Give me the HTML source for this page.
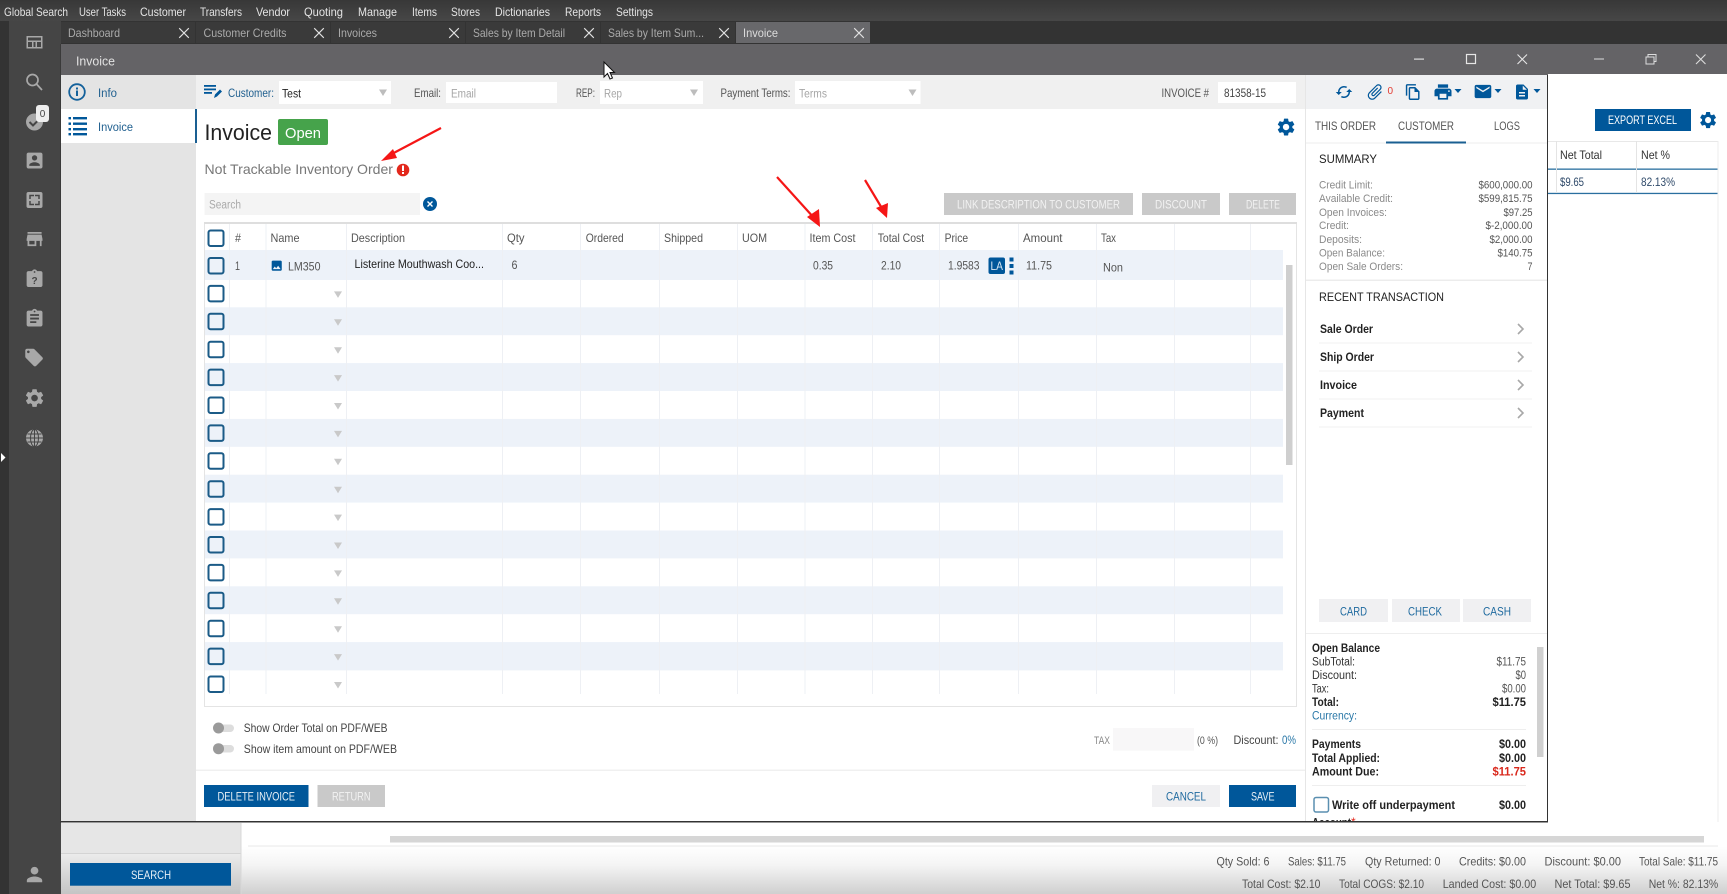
<!DOCTYPE html>
<html><head><meta charset="utf-8"><title>Invoice</title>
<style>
html,body{margin:0;padding:0;background:#fff;width:1727px;height:894px;overflow:hidden}
svg{display:block;font-family:"Liberation Sans",sans-serif;font-size:12px;filter:blur(.3px)}
.m{fill:#e4e4e4;font-size:12px}
.t{fill:#ababab;font-size:12px}
.d{fill:#444;font-size:11.5px}
.g{fill:#8a8a8a;font-size:11px}
.l{fill:#a6a6a6;font-size:11.5px}
.b{fill:#1f5f8f;font-size:11.5px}
.w{fill:#fff;font-size:12px}
.k{fill:#222;font-size:12px}
.bb{fill:#222;font-size:12px;font-weight:700}
.s{fill:#555;font-size:12px}
.i{fill:#a8a8a8}
.u{fill:#00579a}
</style></head><body>
<svg width="1727" height="894" viewBox="0 0 1727 894" xmlns="http://www.w3.org/2000/svg">
<defs>
<linearGradient id="gm" x1="0" y1="0" x2="0" y2="1"><stop offset="0" stop-color="#383838"/><stop offset="1" stop-color="#474747"/></linearGradient>
<linearGradient id="gb" x1="0" y1="0" x2="0" y2="1"><stop offset="0" stop-color="#fff"/><stop offset=".4" stop-color="#f4f4f4"/><stop offset="1" stop-color="#cfcfcf"/></linearGradient>
<linearGradient id="gs" x1="0" y1="0" x2="0" y2="1"><stop offset="0" stop-color="#ececec"/><stop offset="1" stop-color="#c4c4c4"/></linearGradient>
<path id="gear" d="M19.14 12.94c.04-.3.06-.61.06-.94 0-.32-.02-.64-.07-.94l2.03-1.58c.18-.14.23-.41.12-.61l-1.92-3.32c-.12-.22-.37-.29-.59-.22l-2.39.96c-.5-.38-1.03-.7-1.62-.94l-.36-2.54c-.04-.24-.24-.41-.48-.41h-3.84c-.24 0-.43.17-.47.41l-.36 2.54c-.59.24-1.13.57-1.62.94l-2.39-.96c-.22-.08-.47 0-.59.22L2.74 8.87c-.12.21-.08.47.12.61l2.03 1.58c-.05.3-.09.63-.09.94s.02.64.07.94l-2.03 1.58c-.18.14-.23.41-.12.61l1.92 3.32c.12.22.37.29.59.22l2.39-.96c.5.38 1.03.7 1.62.94l.36 2.54c.05.24.24.41.48.41h3.84c.24 0 .44-.17.47-.41l.36-2.54c.59-.24 1.13-.56 1.62-.94l2.39.96c.22.08.47 0 .59-.22l1.92-3.32c.12-.22.07-.47-.12-.61l-2.01-1.58zM12 15.6c-1.98 0-3.6-1.62-3.6-3.6s1.62-3.6 3.6-3.6 3.6 1.62 3.6 3.6-1.62 3.6-3.6 3.6z"/>
<rect id="cb" x="208.5" y="-7.5" width="15" height="15.5" rx="2" fill="none" stroke="#1b5b87" stroke-width="2"/>
<path id="dd" d="M334 -2h8l-4 6.5z" fill="#c9c9c9"/>
<path id="tx" d="M-4.800 -4.800L4.800 4.800M4.800 -4.800L-4.800 4.800" stroke="#e2e2e2" stroke-width="1.100" fill="none"/>
<path id="car" d="M-3.5 -2h7l-3.5 4z" fill="#00579a"/>
<path id="chev" d="M-2.5 -5L2.5 0L-2.5 5" stroke="#a8a8a8" stroke-width="1.6" fill="none"/>
</defs>

<!-- base -->
<rect width="1727" height="894" fill="#fff"/>
<rect width="1727" height="21" fill="url(#gm)"/>
<rect y="21" width="1727" height="23" fill="#333"/>
<rect y="21" width="9" height="873" fill="#333"/>
<rect x="9" y="21" width="52" height="873" fill="#454545"/>

<!-- menu -->
<text class="m" x="4" y="16" textLength="64" lengthAdjust="spacingAndGlyphs">Global Search</text>
<text class="m" x="79" y="16" textLength="47" lengthAdjust="spacingAndGlyphs">User Tasks</text>
<text class="m" x="140" y="16" textLength="46" lengthAdjust="spacingAndGlyphs">Customer</text>
<text class="m" x="200" y="16" textLength="42" lengthAdjust="spacingAndGlyphs">Transfers</text>
<text class="m" x="256" y="16" textLength="34" lengthAdjust="spacingAndGlyphs">Vendor</text>
<text class="m" x="304" y="16" textLength="39" lengthAdjust="spacingAndGlyphs">Quoting</text>
<text class="m" x="358" y="16" textLength="39" lengthAdjust="spacingAndGlyphs">Manage</text>
<text class="m" x="412" y="16" textLength="25" lengthAdjust="spacingAndGlyphs">Items</text>
<text class="m" x="451" y="16" textLength="29" lengthAdjust="spacingAndGlyphs">Stores</text>
<text class="m" x="495" y="16" textLength="55" lengthAdjust="spacingAndGlyphs">Dictionaries</text>
<text class="m" x="565" y="16" textLength="36" lengthAdjust="spacingAndGlyphs">Reports</text>
<text class="m" x="616" y="16" textLength="37" lengthAdjust="spacingAndGlyphs">Settings</text>

<!-- tabs -->
<rect x="61" y="22" width="134" height="21" fill="#3a3a3a"/>
<rect x="196" y="22" width="134" height="21" fill="#3a3a3a"/>
<rect x="331" y="22" width="134" height="21" fill="#3a3a3a"/>
<rect x="466" y="22" width="134" height="21" fill="#3a3a3a"/>
<rect x="601" y="22" width="134" height="21" fill="#3a3a3a"/>
<rect x="736" y="22" width="134" height="21" fill="#68686b"/>
<text class="t" x="68" y="37" textLength="52" lengthAdjust="spacingAndGlyphs">Dashboard</text>
<text class="t" x="203.500" y="37" textLength="83" lengthAdjust="spacingAndGlyphs">Customer Credits</text>
<text class="t" x="338" y="37" textLength="39" lengthAdjust="spacingAndGlyphs">Invoices</text>
<text class="t" x="473" y="37" textLength="92" lengthAdjust="spacingAndGlyphs">Sales by Item Detail</text>
<text class="t" x="608" y="37" textLength="96" lengthAdjust="spacingAndGlyphs">Sales by Item Sum...</text>
<text x="743" y="37" fill="#ddd" textLength="35" lengthAdjust="spacingAndGlyphs">Invoice</text>
<use href="#tx" x="184" y="33"/><use href="#tx" x="319" y="33"/><use href="#tx" x="454" y="33"/><use href="#tx" x="589" y="33"/><use href="#tx" x="724" y="33"/><use href="#tx" x="859" y="33"/>

<!-- sidebar icons -->
<g class="i">
<path fill-rule="evenodd" d="M26.500 36h16v12.500h-16zM28 37.500v3h13v-3zM28 42v5h4v-5zM33.500 42v5h2v-5zM37 42v5h4v-5z"/>
<g fill="none" stroke="#a8a8a8" stroke-width="1.700"><circle cx="32.500" cy="80" r="5.500"/><path d="M36.500 84L42 90"/></g>
<circle cx="34.500" cy="122" r="8.500"/>
<path d="M29.500 122l3.500 3.500 6-6" fill="none" stroke="#454545" stroke-width="2"/>
<path transform="translate(24,150) scale(.88)" d="M3 5v14c0 1.100.89 2 2 2h14c1.100 0 2-.9 2-2V5c0-1.100-.9-2-2-2H5c-1.110 0-2 .9-2 2zm12 4c0 1.660-1.340 3-3 3s-3-1.340-3-3 1.340-3 3-3 3 1.340 3 3zm-9 8c0-2 4-3.100 6-3.100s6 1.100 6 3.100v1H6v-1z"/>
<rect x="26.500" y="192" width="16" height="16" rx="2"/>
<path d="M30 199v-3.500h4M35 195.500h4V199M39 201v3.500h-4M34 204.500h-4V201" fill="none" stroke="#454545" stroke-width="1.500"/>
<path transform="translate(24,228.500) scale(.88)" d="M20 4H4v2h16V4zm1 10v-2l-1-5H4l-1 5v2h1v6h10v-6h4v6h2v-6h1zm-9 4H6v-4h6v4z"/>
<path transform="translate(24,268.500) scale(.88)" d="M19 3h-4.180C14.400 1.840 13.300 1 12 1c-1.300 0-2.400.84-2.820 2H5c-1.100 0-2 .9-2 2v14c0 1.100.9 2 2 2h14c1.100 0 2-.9 2-2V5c0-1.100-.9-2-2-2zm-7 0c.55 0 1 .45 1 1s-.45 1-1 1-1-.45-1-1 .45-1 1-1z"/>
<text x="34.500" y="284" text-anchor="middle" fill="#454545" font-size="10" font-weight="700">?</text>
<path transform="translate(24,308) scale(.88)" d="M19 3h-4.180C14.400 1.840 13.300 1 12 1c-1.300 0-2.400.84-2.820 2H5c-1.100 0-2 .9-2 2v14c0 1.100.9 2 2 2h14c1.100 0 2-.9 2-2V5c0-1.100-.9-2-2-2zm-7 0c.55 0 1 .45 1 1s-.45 1-1 1-1-.45-1-1 .45-1 1-1zm2 14H7v-2h7v2zm3-4H7v-2h10v2zm0-4H7V7h10v2z"/>
<path transform="translate(23.500,347) scale(.88)" d="M21.410 11.580l-9-9C12.050 2.220 11.550 2 11 2H4c-1.100 0-2 .9-2 2v7c0 .55.22 1.050.59 1.420l9 9c.36.36.86.58 1.410.58.55 0 1.050-.22 1.410-.59l7-7c.37-.36.59-.86.59-1.410 0-.55-.23-1.060-.59-1.420zM5.500 7C4.670 7 4 6.330 4 5.500S4.670 4 5.500 4 7 4.670 7 5.500 6.330 7 5.500 7z"/>
<use href="#gear" transform="translate(23.500,387) scale(.92)"/>
<circle cx="34.500" cy="438" r="8.500"/>
<g fill="none" stroke="#454545" stroke-width="1"><ellipse cx="34.500" cy="438" rx="4" ry="8.500"/><path d="M26 438h17M27.500 434h14M27.500 442h14M34.500 429.500v17"/></g>
<path transform="translate(23,863) scale(.96)" d="M12 12c2.210 0 4-1.790 4-4s-1.790-4-4-4-4 1.790-4 4 1.790 4 4 4zm0 2c-2.670 0-8 1.340-8 4v2h16v-2c0-2.660-5.330-4-8-4z"/>
</g>
<path d="M1 453l4.500 4.500L1 462z" fill="#fff"/>
<rect x="36" y="105" width="13" height="17" rx="3" fill="#eee"/>
<text x="42.500" y="117" text-anchor="middle" font-size="10" fill="#444">0</text>

<!-- back window -->
<rect x="1548" y="44" width="179" height="30" fill="#646366"/>
<rect x="1594" y="58.500" width="10" height="1" fill="#ddd"/>
<path d="M1646 57h8v7h-8zM1648 57v-2.500h8v7h-2" fill="none" stroke="#ddd" stroke-width="1"/>
<path d="M1696 54.500l9.500 9.500M1705.500 54.500l-9.500 9.500" stroke="#ddd" stroke-width="1.100"/>
<rect x="1595" y="109" width="96" height="22" class="u"/>
<text class="w" x="1608" y="124" textLength="69" lengthAdjust="spacingAndGlyphs">EXPORT EXCEL</text>
<use href="#gear" class="u" transform="translate(1698,110) scale(.84)"/>
<rect x="1548" y="141" width="170" height="1" fill="#e8e8e8"/>
<rect x="1548" y="168.500" width="170" height="1.300" fill="#2a6f9f"/>
<rect x="1548" y="192.800" width="170" height="1.300" fill="#2a6f9f"/>
<rect x="1556" y="141" width="1" height="52" fill="#e4e4e4"/>
<rect x="1636" y="141" width="1" height="52" fill="#e4e4e4"/>
<rect x="1717.500" y="141" width="1" height="705" fill="#ececec"/>
<text x="1560" y="159" fill="#333" textLength="42" lengthAdjust="spacingAndGlyphs">Net Total</text>
<text x="1641" y="159" fill="#333" textLength="29" lengthAdjust="spacingAndGlyphs">Net %</text>
<text x="1560" y="186" fill="#2f4a6a" textLength="24" lengthAdjust="spacingAndGlyphs">$9.65</text>
<text x="1641" y="186" fill="#2f4a6a" textLength="34" lengthAdjust="spacingAndGlyphs">82.13%</text>

<!-- main window -->
<rect x="61" y="44" width="1487" height="31" fill="#646366"/>
<rect x="61" y="75" width="1487" height="747" fill="#fff"/>
<text x="76" y="65.500" fill="#e2e2e2" font-size="13" textLength="39" lengthAdjust="spacingAndGlyphs">Invoice</text>
<rect x="1414" y="58.500" width="10" height="1.200" fill="#ddd"/>
<rect x="1466.500" y="54.500" width="9" height="9" fill="none" stroke="#e6e6e6" stroke-width="1.200"/>
<path d="M1517.500 54.500l9.500 9.500M1527 54.500l-9.500 9.500" stroke="#e6e6e6" stroke-width="1.100"/>

<!-- left nav -->
<rect x="61" y="75" width="135" height="747" fill="#e4e4e4"/>
<rect x="61" y="109" width="135" height="34" fill="#fff"/>
<rect x="195" y="109" width="2" height="34" fill="#1a5f92"/>
<circle cx="77" cy="92" r="7.800" fill="none" stroke="#14619b" stroke-width="1.800"/>
<rect x="76" y="90.500" width="2" height="5.500" fill="#14619b"/><rect x="76" y="87.500" width="2" height="2" fill="#14619b"/>
<text class="b" x="98" y="97" font-weight="400" textLength="19" lengthAdjust="spacingAndGlyphs">Info</text>
<text class="b" x="98" y="131" textLength="35" lengthAdjust="spacingAndGlyphs">Invoice</text>
<g class="u"><rect x="68.500" y="117" width="2.500" height="2.400"/><rect x="73" y="117" width="14" height="2.400"/><rect x="68.500" y="122.500" width="2.500" height="2.400"/><rect x="73" y="122.500" width="14" height="2.400"/><rect x="68.500" y="128" width="2.500" height="2.400"/><rect x="73" y="128" width="14" height="2.400"/><rect x="68.500" y="133" width="2.500" height="2.400"/><rect x="73" y="133" width="14" height="2.400"/></g>

<!-- toolbar -->
<rect x="196" y="75" width="1109" height="34" fill="#f0f0f0"/>
<rect x="1305" y="75" width="242" height="34" fill="#f0f1f3"/>
<g class="u"><rect x="204" y="85" width="12" height="1.800"/><rect x="204" y="88.500" width="12" height="1.800"/><rect x="204" y="92" width="8" height="1.800"/><path d="M214 98l1-3.500 5-5 2 2-5 5z"/></g>
<text class="b" x="228" y="97" textLength="46" lengthAdjust="spacingAndGlyphs">Customer:</text>
<rect x="279" y="81" width="112" height="23" fill="#fff"/>
<text class="k" x="282" y="97.500" font-size="11.500" textLength="19" lengthAdjust="spacingAndGlyphs">Test</text>
<path d="M379 89.500h8l-4 6.500z" fill="#bdbdbd"/>
<text class="s" x="414" y="97" font-size="11" textLength="27" lengthAdjust="spacingAndGlyphs">Email:</text>
<rect x="446" y="82" width="111" height="21" fill="#fff"/>
<text class="l" x="451" y="97.500" textLength="25" lengthAdjust="spacingAndGlyphs">Email</text>
<text class="s" x="576" y="97" font-size="11" textLength="19" lengthAdjust="spacingAndGlyphs">REP:</text>
<rect x="600" y="81" width="103" height="23" fill="#fff"/>
<text class="l" x="604" y="97.500" textLength="18" lengthAdjust="spacingAndGlyphs">Rep</text>
<path d="M690 89.500h8l-4 6.500z" fill="#bdbdbd"/>
<text class="s" x="720.500" y="97" font-size="11" textLength="70" lengthAdjust="spacingAndGlyphs">Payment Terms:</text>
<rect x="795" y="81" width="125.500" height="23" fill="#fff"/>
<text class="l" x="799" y="97.500" textLength="28" lengthAdjust="spacingAndGlyphs">Terms</text>
<path d="M908.500 89.500h8l-4 6.500z" fill="#bdbdbd"/>
<text class="s" x="1161.500" y="97" font-size="11" fill="#666" textLength="47.500" lengthAdjust="spacingAndGlyphs">INVOICE #</text>
<rect x="1218" y="82" width="78" height="21" fill="#fff"/>
<text x="1224" y="97" fill="#444" textLength="42" lengthAdjust="spacingAndGlyphs">81358-15</text>

<!-- right panel toolbar icons -->
<g class="u">
<path transform="translate(1335,83) scale(.75) rotate(90 12 12)" d="M12 4V1L8 5l4 4V6c3.310 0 6 2.690 6 6 0 1.010-.25 1.970-.7 2.800l1.460 1.460C19.540 15.030 20 13.570 20 12c0-4.420-3.580-8-8-8zm0 14c-3.310 0-6-2.690-6-6 0-1.010.25-1.970.7-2.800L5.240 7.740C4.460 8.970 4 10.430 4 12c0 4.420 3.580 8 8 8v3l4-4-4-4v3z"/>
<path transform="translate(1365.400,82.400) scale(.8) rotate(45 12 12)" d="M16.500 6v11.500c0 2.210-1.790 4-4 4s-4-1.790-4-4V5c0-1.380 1.120-2.500 2.500-2.500s2.500 1.120 2.500 2.500v10.500c0 .55-.45 1-1 1s-1-.45-1-1V6H10v9.500c0 1.380 1.120 2.500 2.500 2.500s2.500-1.120 2.500-2.500V5c0-2.210-1.790-4-4-4S7 2.790 7 5v12.500c0 3.040 2.460 5.500 5.500 5.500s5.500-2.460 5.500-5.500V6h-1.500z"/>
<path transform="translate(1404.400,83.400) scale(.72)" d="M16 1H4c-1.100 0-2 .9-2 2v14h2V3h12V1zm-1 4H8c-1.100 0-1.990.9-1.990 2L6 21c0 1.100.89 2 1.990 2H19c1.100 0 2-.9 2-2V11l-6-6zM8 21V7h6v5h5v9H8z"/>
<path transform="translate(1432.800,81.800) scale(.85)" d="M19 8H5c-1.660 0-3 1.340-3 3v6h4v4h12v-4h4v-6c0-1.660-1.340-3-3-3zm-3 11H8v-5h8v5zm3-7c-.55 0-1-.45-1-1s.45-1 1-1 1 .45 1 1-.45 1-1 1zm-1-9H6v4h12V3z"/>
<path transform="translate(1473,81.500) scale(.83)" d="M20 4H4c-1.100 0-1.990.9-1.990 2L2 18c0 1.100.9 2 2 2h16c1.100 0 2-.9 2-2V6c0-1.100-.9-2-2-2zm0 4l-8 5-8-5V6l8 5 8-5v2z"/>
<path transform="translate(1513,83) scale(.75)" d="M14 2H6c-1.100 0-1.990.9-1.990 2L4 20c0 1.100.89 2 1.990 2H18c1.100 0 2-.9 2-2V8l-6-6zm2 16H8v-2h8v2zm0-4H8v-2h8v2zm-3-5V3.500L18.500 9H13z"/>
</g>
<text x="1387.500" y="94" fill="#e23a30" font-size="10">0</text>
<use href="#car" x="1458" y="91"/><use href="#car" x="1498" y="91"/><use href="#car" x="1537" y="91"/>

<!-- heading -->
<text x="204.500" y="140" fill="#222" font-size="22" textLength="67.500" lengthAdjust="spacingAndGlyphs">Invoice</text>
<rect x="278" y="119" width="50" height="26" rx="2" fill="#46a34b"/>
<text x="285" y="138" fill="#fff" font-size="15" textLength="36" lengthAdjust="spacingAndGlyphs">Open</text>
<text x="204.500" y="174" fill="#777" font-size="14" textLength="188.500" lengthAdjust="spacingAndGlyphs">Not Trackable Inventory Order</text>
<circle cx="403" cy="170" r="6.300" fill="#e3281c"/>
<rect x="402" y="165.500" width="2" height="5.500" fill="#fff"/><rect x="402" y="172" width="2" height="2" fill="#fff"/>
<rect x="204.500" y="193" width="215.500" height="22" fill="#f4f4f4"/>
<text x="209" y="208.500" fill="#aaa" font-size="11.500" textLength="32" lengthAdjust="spacingAndGlyphs">Search</text>
<circle cx="430" cy="204" r="7" class="u"/>
<path d="M427.500 201.500l5 5M432.500 201.500l-5 5" stroke="#fff" stroke-width="1.400"/>
<use href="#gear" class="u" transform="translate(1275.500,116.500) scale(.88)"/>
<rect x="944" y="193" width="189" height="22" fill="#c9c9c9"/>
<rect x="1142" y="193" width="78" height="22" fill="#c9c9c9"/>
<rect x="1229" y="193" width="67" height="22" fill="#c9c9c9"/>
<text x="957" y="208.500" fill="#f2f2f2" font-size="12" textLength="163" lengthAdjust="spacingAndGlyphs">LINK DESCRIPTION TO CUSTOMER</text>
<text x="1155" y="208.500" fill="#f2f2f2" font-size="12" textLength="52" lengthAdjust="spacingAndGlyphs">DISCOUNT</text>
<text x="1246" y="208.500" fill="#f2f2f2" font-size="12" textLength="34" lengthAdjust="spacingAndGlyphs">DELETE</text>

<!-- table -->
<rect x="204.500" y="222.500" width="1092" height="484" fill="#fff" stroke="#e4e4e4" stroke-width="1"/>
<rect x="204" y="222" width="1093" height="2" fill="#dedede"/>
<g fill="#edf2f9">
<rect x="205" y="250" width="1078" height="30"/>
<rect x="205" y="307.300" width="1078" height="27.900"/>
<rect x="205" y="363.100" width="1078" height="27.900"/>
<rect x="205" y="418.900" width="1078" height="27.900"/>
<rect x="205" y="474.700" width="1078" height="27.900"/>
<rect x="205" y="530.500" width="1078" height="27.900"/>
<rect x="205" y="586.300" width="1078" height="27.900"/>
<rect x="205" y="642.100" width="1078" height="28.300"/>
</g>
<g fill="#eef0f4">
<rect x="229" y="224" width="1" height="470"/><rect x="265.500" y="224" width="1" height="470"/><rect x="346" y="224" width="1" height="470"/><rect x="502" y="224" width="1" height="470"/><rect x="580" y="224" width="1" height="470"/><rect x="659" y="224" width="1" height="470"/><rect x="737" y="224" width="1" height="470"/><rect x="804.500" y="224" width="1" height="470"/><rect x="872" y="224" width="1" height="470"/><rect x="939" y="224" width="1" height="470"/><rect x="1018" y="224" width="1" height="470"/><rect x="1096" y="224" width="1" height="470"/><rect x="1174" y="224" width="1" height="470"/><rect x="1250" y="224" width="1" height="470"/>
</g>
<rect x="1286" y="265" width="6.500" height="200" fill="#cfcfcf"/>
<use href="#cb" y="238"/><use href="#cb" y="265.500"/><use href="#cb" y="293.400"/><use href="#cb" y="321.300"/><use href="#cb" y="349.200"/><use href="#cb" y="377.100"/><use href="#cb" y="405"/><use href="#cb" y="432.900"/><use href="#cb" y="460.800"/><use href="#cb" y="488.700"/><use href="#cb" y="516.600"/><use href="#cb" y="544.500"/><use href="#cb" y="572.400"/><use href="#cb" y="600.300"/><use href="#cb" y="628.200"/><use href="#cb" y="656.100"/><use href="#cb" y="684"/>
<use href="#dd" y="293.400"/><use href="#dd" y="321.300"/><use href="#dd" y="349.200"/><use href="#dd" y="377.100"/><use href="#dd" y="405"/><use href="#dd" y="432.900"/><use href="#dd" y="460.800"/><use href="#dd" y="488.700"/><use href="#dd" y="516.600"/><use href="#dd" y="544.500"/><use href="#dd" y="572.400"/><use href="#dd" y="600.300"/><use href="#dd" y="628.200"/><use href="#dd" y="656.100"/><use href="#dd" y="684"/>
<g class="s">
<text x="235" y="242" textLength="6" lengthAdjust="spacingAndGlyphs">#</text>
<text x="270.500" y="242" textLength="29" lengthAdjust="spacingAndGlyphs">Name</text>
<text x="351" y="242" textLength="54" lengthAdjust="spacingAndGlyphs">Description</text>
<text x="507" y="242" textLength="17.500" lengthAdjust="spacingAndGlyphs">Qty</text>
<text x="585.700" y="242" textLength="38" lengthAdjust="spacingAndGlyphs">Ordered</text>
<text x="664" y="242" textLength="39" lengthAdjust="spacingAndGlyphs">Shipped</text>
<text x="742" y="242" textLength="25" lengthAdjust="spacingAndGlyphs">UOM</text>
<text x="809.500" y="242" textLength="46" lengthAdjust="spacingAndGlyphs">Item Cost</text>
<text x="877.700" y="242" textLength="46.500" lengthAdjust="spacingAndGlyphs">Total Cost</text>
<text x="944.600" y="242" textLength="23.500" lengthAdjust="spacingAndGlyphs">Price</text>
<text x="1023" y="242" textLength="39.500" lengthAdjust="spacingAndGlyphs">Amount</text>
<text x="1101" y="242" textLength="15" lengthAdjust="spacingAndGlyphs">Tax</text>
<text x="235" y="270" textLength="5" lengthAdjust="spacingAndGlyphs">1</text>
<text x="288" y="270.500" textLength="32.500" lengthAdjust="spacingAndGlyphs">LM350</text>
<text x="511.500" y="269" textLength="6" lengthAdjust="spacingAndGlyphs">6</text>
<text x="813" y="269.500" textLength="20" lengthAdjust="spacingAndGlyphs">0.35</text>
<text x="881" y="269.500" textLength="20" lengthAdjust="spacingAndGlyphs">2.10</text>
<text x="948" y="269.500" textLength="31.500" lengthAdjust="spacingAndGlyphs">1.9583</text>
<text x="1026" y="269.500" textLength="26" lengthAdjust="spacingAndGlyphs">11.75</text>
<text x="1103" y="271.500" textLength="20" lengthAdjust="spacingAndGlyphs">Non</text>
</g>
<text class="k" x="354.500" y="268" textLength="129.500" lengthAdjust="spacingAndGlyphs">Listerine Mouthwash Coo...</text>
<path transform="translate(270,259) scale(.56)" class="u" d="M21 19V5c0-1.100-.9-2-2-2H5c-1.100 0-2 .9-2 2v14c0 1.100.9 2 2 2h14c1.100 0 2-.9 2-2zM8.500 13.500l2.500 3.010L14.500 12l4.500 6H5l3.500-4.500z"/>
<rect x="988.500" y="257.500" width="16.500" height="16.500" rx="2" class="u"/>
<text x="990.500" y="270" fill="#d8e8f4" font-size="12" textLength="12.500" lengthAdjust="spacingAndGlyphs">LA</text>
<g class="u"><rect x="1009.500" y="257.500" width="4" height="4"/><rect x="1009.500" y="264" width="4" height="4"/><rect x="1009.500" y="270.500" width="4" height="4"/></g>

<!-- toggles -->
<rect x="214" y="724.500" width="20" height="7.500" rx="3.700" fill="#ddd"/>
<circle cx="218.500" cy="728" r="5.500" fill="#9a9a9a"/>
<rect x="214" y="745" width="20" height="7.500" rx="3.700" fill="#ddd"/>
<circle cx="218.500" cy="748.700" r="5.500" fill="#9a9a9a"/>
<text x="243.800" y="732" fill="#444" font-size="12" textLength="143.700" lengthAdjust="spacingAndGlyphs">Show Order Total on PDF/WEB</text>
<text x="243.800" y="753" fill="#444" font-size="12" textLength="153.200" lengthAdjust="spacingAndGlyphs">Show item amount on PDF/WEB</text>
<text x="1094" y="744" fill="#888" font-size="11" textLength="16" lengthAdjust="spacingAndGlyphs">TAX</text>
<rect x="1113" y="728" width="81" height="22.700" fill="#f8f7f8"/>
<text x="1197" y="744" fill="#555" font-size="11" textLength="21" lengthAdjust="spacingAndGlyphs">(0 %)</text>
<text x="1233.500" y="744" fill="#444" font-size="12" textLength="45" lengthAdjust="spacingAndGlyphs">Discount:</text>
<text x="1282" y="744" fill="#2a78a8" font-size="12" textLength="14" lengthAdjust="spacingAndGlyphs">0%</text>
<rect x="196" y="769.500" width="1109" height="1.500" fill="#f0f0f0"/>

<!-- footer buttons -->
<rect x="204" y="785" width="104.500" height="22" class="u"/>
<text x="217.500" y="800.500" fill="#e8f0f6" font-size="12" textLength="77.500" lengthAdjust="spacingAndGlyphs">DELETE INVOICE</text>
<rect x="317.500" y="785" width="67.500" height="22" fill="#c9c9c9"/>
<text x="332" y="800.500" fill="#f2f2f2" font-size="12" textLength="38.500" lengthAdjust="spacingAndGlyphs">RETURN</text>
<rect x="1152" y="785" width="68" height="22" fill="#f0f0f2"/>
<text x="1166" y="800.500" fill="#1f6a9f" font-size="12" textLength="40" lengthAdjust="spacingAndGlyphs">CANCEL</text>
<rect x="1229" y="785" width="67" height="22" class="u"/>
<text x="1251" y="800.500" fill="#e8f0f6" font-size="12" textLength="23.500" lengthAdjust="spacingAndGlyphs">SAVE</text>

<!-- right panel -->
<rect x="1305" y="75" width="1" height="747" fill="#e6e6e6"/>
<text class="s" x="1315" y="130" fill="#444" textLength="61" lengthAdjust="spacingAndGlyphs">THIS ORDER</text>
<text class="s" x="1398" y="130" textLength="56" lengthAdjust="spacingAndGlyphs">CUSTOMER</text>
<text class="s" x="1494" y="130" textLength="26" lengthAdjust="spacingAndGlyphs">LOGS</text>
<rect x="1306" y="142.500" width="241" height="1" fill="#ececec"/>
<rect x="1386" y="141.500" width="80" height="2" fill="#1a5f92"/>
<text x="1319" y="163" fill="#222" font-size="12" textLength="58" lengthAdjust="spacingAndGlyphs">SUMMARY</text>
<g class="g">
<text x="1319" y="188.700" textLength="54" lengthAdjust="spacingAndGlyphs">Credit Limit:</text>
<text x="1319" y="202" textLength="74" lengthAdjust="spacingAndGlyphs">Available Credit:</text>
<text x="1319" y="216" textLength="68" lengthAdjust="spacingAndGlyphs">Open Invoices:</text>
<text x="1319" y="229" textLength="30" lengthAdjust="spacingAndGlyphs">Credit:</text>
<text x="1319" y="243" textLength="43" lengthAdjust="spacingAndGlyphs">Deposits:</text>
<text x="1319" y="256.500" textLength="66" lengthAdjust="spacingAndGlyphs">Open Balance:</text>
<text x="1319" y="270" textLength="84" lengthAdjust="spacingAndGlyphs">Open Sale Orders:</text>
</g>
<g fill="#555" font-size="11">
<text x="1478.500" y="188.700" textLength="54" lengthAdjust="spacingAndGlyphs">$600,000.00</text>
<text x="1478.500" y="202" textLength="54" lengthAdjust="spacingAndGlyphs">$599,815.75</text>
<text x="1503.500" y="216" textLength="29" lengthAdjust="spacingAndGlyphs">$97.25</text>
<text x="1485.500" y="229" textLength="47" lengthAdjust="spacingAndGlyphs">$-2,000.00</text>
<text x="1489.500" y="243" textLength="43" lengthAdjust="spacingAndGlyphs">$2,000.00</text>
<text x="1497.500" y="256.500" textLength="35" lengthAdjust="spacingAndGlyphs">$140.75</text>
<text x="1527.500" y="270" textLength="5" lengthAdjust="spacingAndGlyphs">7</text>
</g>
<rect x="1306" y="279.500" width="241" height="1.500" fill="#ececec"/>
<text x="1319" y="301" fill="#222" font-size="12" textLength="125" lengthAdjust="spacingAndGlyphs">RECENT TRANSACTION</text>
<g class="bb" font-size="11.500">
<text x="1320" y="333" textLength="53" lengthAdjust="spacingAndGlyphs">Sale Order</text>
<text x="1320" y="361" textLength="54" lengthAdjust="spacingAndGlyphs">Ship Order</text>
<text x="1320" y="389" textLength="37" lengthAdjust="spacingAndGlyphs">Invoice</text>
<text x="1320" y="417" textLength="44" lengthAdjust="spacingAndGlyphs">Payment</text>
</g>
<use href="#chev" x="1520.500" y="329"/><use href="#chev" x="1520.500" y="357"/><use href="#chev" x="1520.500" y="385"/><use href="#chev" x="1520.500" y="413"/>
<g fill="#f0f0f0"><rect x="1319" y="342.500" width="213" height="1"/><rect x="1319" y="370.500" width="213" height="1"/><rect x="1319" y="398.500" width="213" height="1"/><rect x="1319" y="426.500" width="213" height="1"/></g>

<g fill="#f0f0f2"><rect x="1319" y="599" width="69" height="23"/><rect x="1392" y="599" width="68" height="23"/><rect x="1463" y="599" width="68" height="23"/></g>
<g fill="#1f6a9f" font-size="12">
<text x="1340" y="615.500" textLength="27" lengthAdjust="spacingAndGlyphs">CARD</text>
<text x="1408" y="615.500" textLength="34" lengthAdjust="spacingAndGlyphs">CHECK</text>
<text x="1483" y="615.500" textLength="28" lengthAdjust="spacingAndGlyphs">CASH</text>
</g>
<rect x="1306" y="633" width="241" height="1" fill="#eee"/>
<rect x="1537" y="647" width="6.500" height="110" fill="#d0d0d0"/>
<text class="bb" x="1312" y="652" textLength="68" lengthAdjust="spacingAndGlyphs">Open Balance</text>
<g fill="#333" font-size="11.500">
<text x="1312" y="665.700" textLength="43" lengthAdjust="spacingAndGlyphs">SubTotal:</text>
<text x="1312" y="679" textLength="45" lengthAdjust="spacingAndGlyphs">Discount:</text>
<text x="1312" y="692.600" textLength="17" lengthAdjust="spacingAndGlyphs">Tax:</text>
</g>
<text class="bb" x="1312" y="706" textLength="27" lengthAdjust="spacingAndGlyphs">Total:</text>
<text x="1312" y="719.600" fill="#2a78a8" font-size="11.500" textLength="45" lengthAdjust="spacingAndGlyphs">Currency:</text>
<g fill="#555" font-size="11.500">
<text x="1496.500" y="665.700" textLength="29.500" lengthAdjust="spacingAndGlyphs">$11.75</text>
<text x="1515.500" y="679" textLength="10.500" lengthAdjust="spacingAndGlyphs">$0</text>
<text x="1502" y="692.600" textLength="24" lengthAdjust="spacingAndGlyphs">$0.00</text>
</g>
<text class="bb" x="1492.500" y="706" textLength="33.500" lengthAdjust="spacingAndGlyphs">$11.75</text>
<rect x="1312" y="729" width="214" height="1" fill="#eee"/>
<text class="bb" x="1312" y="748" textLength="49" lengthAdjust="spacingAndGlyphs">Payments</text>
<text class="bb" x="1312" y="762" textLength="68" lengthAdjust="spacingAndGlyphs">Total Applied:</text>
<text class="bb" x="1312" y="775.500" textLength="67" lengthAdjust="spacingAndGlyphs">Amount Due:</text>
<text class="bb" x="1499" y="748" textLength="27" lengthAdjust="spacingAndGlyphs">$0.00</text>
<text class="bb" x="1499" y="762" textLength="27" lengthAdjust="spacingAndGlyphs">$0.00</text>
<text x="1492.500" y="775.500" fill="#d9281c" font-size="12" font-weight="700" textLength="33.500" lengthAdjust="spacingAndGlyphs">$11.75</text>
<rect x="1312" y="785" width="214" height="1" fill="#eee"/>
<rect x="1314" y="797.500" width="14.500" height="14.500" rx="2" fill="#fff" stroke="#5a8fb0" stroke-width="1.500"/>
<text class="bb" x="1332" y="809" textLength="123" lengthAdjust="spacingAndGlyphs">Write off underpayment</text>
<text class="bb" x="1499" y="809" textLength="27" lengthAdjust="spacingAndGlyphs">$0.00</text>
<text class="bb" x="1312" y="826.500" textLength="39" lengthAdjust="spacingAndGlyphs">Account</text>
<text x="1351" y="826" fill="#e3281c" font-size="12">*</text>

<!-- annotations -->
<g fill="none" stroke="#f51616" stroke-width="2.200">
<path d="M441 128L388 156"/>
<path d="M777 177L815 219"/>
<path d="M865 180L883 210"/>
</g>
<g fill="#f51616">
<path d="M381 161L393 149L397 158z"/>
<path d="M820 227L807 217L819 209z"/>
<path d="M887 218L876 208L888 203z"/>
</g>
<path d="M604 62v15l3.500-3.500 2.500 5.500 2.500-1-2.500-5.500h4.500z" fill="#fff" stroke="#111" stroke-width="1"/>

<!-- bottom area -->
<rect x="61" y="822" width="1666" height="72" fill="#fff"/>
<rect x="241" y="846" width="1486" height="48" fill="url(#gb)"/>
<rect x="61" y="823" width="180" height="30" fill="#e6e6e6"/>
<rect x="61" y="853" width="180" height="41" fill="url(#gs)"/>
<rect x="61" y="853" width="180" height="1" fill="#d4d4d4"/>
<rect x="240.500" y="823" width="1" height="71" fill="#d8d8d8"/>
<rect x="248" y="845.500" width="1470" height="1" fill="#e8e8e8"/>
<rect x="390" y="836" width="1314" height="6.500" fill="#d6d6d6"/>
<rect x="70" y="863" width="161" height="22.700" class="u"/>
<text x="131" y="879" fill="#e8f0f6" font-size="12" textLength="40" lengthAdjust="spacingAndGlyphs">SEARCH</text>
<rect x="61" y="821" width="1487" height="1.500" fill="#333"/>
<rect x="1547" y="75" width="1" height="747" fill="#333"/>
<rect x="60" y="44" width="1" height="779" fill="#3a3a3a"/>
<g class="s" fill="#444">
<text x="1216.500" y="865.500" textLength="53" lengthAdjust="spacingAndGlyphs">Qty Sold: 6</text>
<text x="1288" y="865.500" textLength="58" lengthAdjust="spacingAndGlyphs">Sales: $11.75</text>
<text x="1365" y="865.500" textLength="75.500" lengthAdjust="spacingAndGlyphs">Qty Returned: 0</text>
<text x="1459" y="865.500" textLength="67" lengthAdjust="spacingAndGlyphs">Credits: $0.00</text>
<text x="1544.500" y="865.500" textLength="76.500" lengthAdjust="spacingAndGlyphs">Discount: $0.00</text>
<text x="1639" y="865.500" textLength="79" lengthAdjust="spacingAndGlyphs">Total Sale: $11.75</text>
<text x="1242" y="888" textLength="78.500" lengthAdjust="spacingAndGlyphs">Total Cost: $2.10</text>
<text x="1339" y="888" textLength="85" lengthAdjust="spacingAndGlyphs">Total COGS: $2.10</text>
<text x="1442.700" y="888" textLength="93.500" lengthAdjust="spacingAndGlyphs">Landed Cost: $0.00</text>
<text x="1554.500" y="888" textLength="76" lengthAdjust="spacingAndGlyphs">Net Total: $9.65</text>
<text x="1648.700" y="888" textLength="69.500" lengthAdjust="spacingAndGlyphs">Net %: 82.13%</text>
</g>
</svg>
</body></html>
